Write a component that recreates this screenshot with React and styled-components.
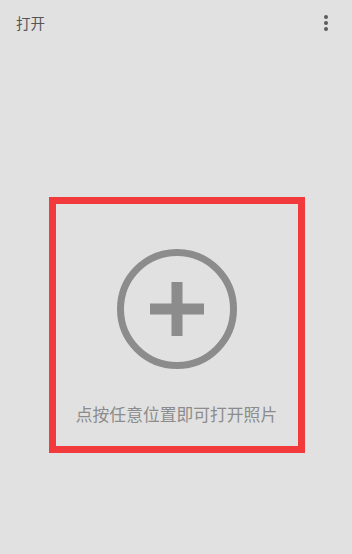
import React from 'react'
import styled, { createGlobalStyle } from 'styled-components'

const GlobalStyle = createGlobalStyle`
    html, body {
        margin: 0;
        padding: 0;
        background: #e1e1e1;
        font-family: "Noto Sans CJK SC", "Noto Sans", sans-serif;
    }
`

const Page = styled.div`
    width: 100%;
    min-height: 100vh;
    background: #e1e1e1;
    display: flex;
    flex-direction: column;
`

const Header = styled.div`
    height: 48px;
    display: flex;
    align-items: center;
    justify-content: space-between;
    padding: 0 20px 0 16px;
    box-sizing: border-box;
`

const Title = styled.h1`
    margin: 0;
    margin-top: -3px;
    font-size: 14.5px;
    font-weight: 400;
    color: #555;
`

const MenuButton = styled.div`
    width: 12px;
    height: 20px;
    display: flex;
    align-items: center;
    justify-content: center;
    margin-top: -3px;
`

const Body = styled.div`
    display: flex;
    justify-content: center;
    padding-top: 149px;
    padding-left: 1px;
`

const DropZone = styled.div`
    width: 256px;
    height: 256px;
    box-sizing: border-box;
    border: 7px solid #f2393b;
    display: flex;
    flex-direction: column;
    align-items: center;
    padding-top: 45px;
`

const Hint = styled.p`
    margin: 34px 0 0;
    font-size: 16.8px;
    line-height: 22px;
    color: #8c8c8c;
    letter-spacing: 0;
`

const dots = (
    <svg width="6" height="18" viewBox="0 0 6 18">
        <circle cx="3" cy="3" r="2" fill="#5c5c5c" />
        <circle cx="3" cy="9" r="2" fill="#5c5c5c" />
        <circle cx="3" cy="15" r="2" fill="#5c5c5c" />
    </svg>
)

const AddIcon = () => (
    <svg width="120" height="120" viewBox="0 0 120 120">
        <circle cx="60" cy="60" r="56.5" fill="none" stroke="#8c8c8c" strokeWidth="7" />
        <rect x="33" y="54.5" width="54" height="11" fill="#8c8c8c" />
        <rect x="54.5" y="33" width="11" height="54" fill="#8c8c8c" />
    </svg>
)

const App = () => (
    <Page>
        <GlobalStyle />
        <Header>
            <Title>打开</Title>
            <MenuButton>{dots}</MenuButton>
        </Header>
        <Body>
            <DropZone>
                <AddIcon />
                <Hint>点按任意位置即可打开照片</Hint>
            </DropZone>
        </Body>
    </Page>
)

export default App
